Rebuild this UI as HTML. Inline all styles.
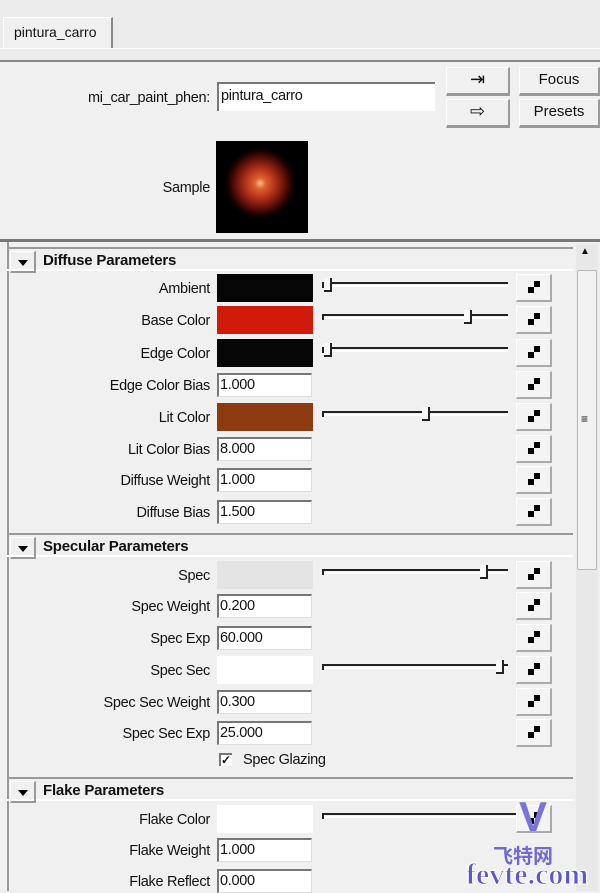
<!DOCTYPE html>
<html><head><meta charset="utf-8"><style>
*{margin:0;padding:0;box-sizing:border-box}
body{width:600px;height:891px;overflow:hidden;background:#f0f0f0;font-family:"Liberation Sans",sans-serif;font-size:14px;color:#111;position:relative}
.a{position:absolute}
.lb{position:absolute;right:390px;white-space:nowrap;font-size:14.5px;letter-spacing:-0.3px;margin-top:2px}
.sw{position:absolute;left:217px;width:96px;height:28px}
.in{position:absolute;left:217px;width:95px;height:24px;background:#fff;border-top:2px solid #777;border-left:2px solid #777;border-right:1px solid #ddd;border-bottom:1px solid #ddd;font-size:14.5px;padding-left:1px;line-height:21px;letter-spacing:-0.3px}
.sl{position:absolute;left:322px;width:186px;height:2px;background:#222;box-shadow:0 3px 0 #fff}
.sl:before{content:"";position:absolute;left:0;top:0;width:2px;height:6px;background:#222}
.th{position:absolute;width:8px;height:14px;border-right:2px solid #222;border-bottom:2px solid #222;background:#f8f8f8}
.mb{position:absolute;left:516px;width:36px;height:28px;background:#f4f4f4;border:1px solid #fff;border-right:2px solid #aaa;border-bottom:2px solid #aaa}
.mb i{position:absolute;width:6px;height:6px;background:#000}
.hd{position:absolute;left:7px;width:566px;height:24px;border-top:2px solid #999;box-shadow:0 -2px 0 #fff inset}
.hd b{position:absolute;left:36px;top:3px;font-size:15px;letter-spacing:-0.2px}
.tr{position:absolute;left:3px;top:2px;width:26px;height:22px;border:1px solid #fff;border-right:2px solid #999;border-bottom:2px solid #999}
.tr:after{content:"";position:absolute;left:7px;top:8px;border-left:5px solid transparent;border-right:5px solid transparent;border-top:6px solid #000}
.btn{position:absolute;background:#f0f0f0;border:1px solid #fff;border-right:2px solid #999;border-bottom:3px solid #999;text-align:center;font-size:15px;line-height:24px}
</style></head><body>
<div class="a" style="left:0;top:0;width:600px;height:62px;background:#ececec"></div>
<div class="a" style="left:3px;top:17px;width:110px;height:32px;border-left:1px solid #fff;border-top:1px solid #fff;border-right:2px solid #888;background:#f0f0f0;padding:6px 0 0 10px;font-size:14px">pintura_carro</div>
<div class="a" style="left:0;top:48px;width:600px;height:1px;background:#fff"></div>
<div class="a" style="left:0;top:60px;width:600px;height:2px;background:#888"></div>
<div class="lb" style="top:88px">mi_car_paint_phen:</div>
<div class="a" style="left:217px;top:82px;width:218px;height:29px;background:#fff;border-top:2px solid #777;border-left:2px solid #777;padding:4px 2px;font-size:14.5px;letter-spacing:-0.3px">pintura_carro</div>
<div class="btn" style="left:446px;top:67px;width:64px;height:29px;font-size:18px;line-height:22px">⇥</div>
<div class="btn" style="left:446px;top:99px;width:64px;height:29px;font-size:18px;line-height:22px">⇨</div>
<div class="btn" style="left:519px;top:67px;width:81px;height:29px">Focus</div>
<div class="btn" style="left:519px;top:99px;width:81px;height:29px">Presets</div>
<div class="lb" style="top:178px">Sample</div>
<div class="a" style="left:216px;top:141px;width:92px;height:92px;background:radial-gradient(circle at 48% 46%,#f7c08a 0,#e0602c 8%,#b2301a 22%,#601008 36%,#1a0200 46%,#000 52%)"></div>
<div class="a" style="left:0;top:239px;width:600px;height:3px;background:#777"></div>
<div class="a" style="left:7px;top:242px;width:2px;height:649px;background:#999"></div>
<div class="a" style="left:576px;top:244px;width:22px;height:647px;background:#e8e8e8"></div>
<div class="a" style="left:580px;top:246px;font-size:10px">▲</div>
<div class="a" style="left:577px;top:270px;width:20px;height:300px;background:#f2f2f2;border:1px solid #bbb;border-radius:2px"></div>
<div class="a" style="left:581px;top:415px;font-size:12px;line-height:8px">≡</div>

<div class="hd" style="top:247px"><div class="tr"></div><b>Diffuse Parameters</b></div>
<div class="lb" style="top:279px">Ambient</div><div class="sw" style="top:274px;background:#060606"></div><div class="sl" style="top:282px"><div class="th" style="left:2px;top:-4px"></div></div><div class="mb" style="top:274px"><i style="left:17px;top:6px"></i><i style="left:11px;top:12px"></i></div>
<div class="lb" style="top:311px">Base Color</div><div class="sw" style="top:306px;background:#d01a0a"></div><div class="sl" style="top:314px"><div class="th" style="left:142px;top:-4px"></div></div><div class="mb" style="top:306px"><i style="left:17px;top:6px"></i><i style="left:11px;top:12px"></i></div>
<div class="lb" style="top:344px">Edge Color</div><div class="sw" style="top:339px;background:#060606"></div><div class="sl" style="top:347px"><div class="th" style="left:2px;top:-4px"></div></div><div class="mb" style="top:339px"><i style="left:17px;top:6px"></i><i style="left:11px;top:12px"></i></div>
<div class="lb" style="top:376px">Edge Color Bias</div><div class="in" style="top:373px">1.000</div><div class="mb" style="top:371px"><i style="left:17px;top:6px"></i><i style="left:11px;top:12px"></i></div>
<div class="lb" style="top:408px">Lit Color</div><div class="sw" style="top:403px;background:#8e3a10"></div><div class="sl" style="top:411px"><div class="th" style="left:100px;top:-4px"></div></div><div class="mb" style="top:403px"><i style="left:17px;top:6px"></i><i style="left:11px;top:12px"></i></div>
<div class="lb" style="top:440px">Lit Color Bias</div><div class="in" style="top:437px">8.000</div><div class="mb" style="top:435px"><i style="left:17px;top:6px"></i><i style="left:11px;top:12px"></i></div>
<div class="lb" style="top:471px">Diffuse Weight</div><div class="in" style="top:468px">1.000</div><div class="mb" style="top:466px"><i style="left:17px;top:6px"></i><i style="left:11px;top:12px"></i></div>
<div class="lb" style="top:503px">Diffuse Bias</div><div class="in" style="top:500px">1.500</div><div class="mb" style="top:498px"><i style="left:17px;top:6px"></i><i style="left:11px;top:12px"></i></div>

<div class="hd" style="top:533px"><div class="tr"></div><b>Specular Parameters</b></div>
<div class="lb" style="top:566px">Spec</div><div class="sw" style="top:561px;background:#e4e4e4"></div><div class="sl" style="top:569px"><div class="th" style="left:158px;top:-4px"></div></div><div class="mb" style="top:561px"><i style="left:17px;top:6px"></i><i style="left:11px;top:12px"></i></div>
<div class="lb" style="top:597px">Spec Weight</div><div class="in" style="top:594px">0.200</div><div class="mb" style="top:592px"><i style="left:17px;top:6px"></i><i style="left:11px;top:12px"></i></div>
<div class="lb" style="top:629px">Spec Exp</div><div class="in" style="top:626px">60.000</div><div class="mb" style="top:624px"><i style="left:17px;top:6px"></i><i style="left:11px;top:12px"></i></div>
<div class="lb" style="top:661px">Spec Sec</div><div class="sw" style="top:656px;background:#fff"></div><div class="sl" style="top:664px"><div class="th" style="left:174px;top:-4px"></div></div><div class="mb" style="top:656px"><i style="left:17px;top:6px"></i><i style="left:11px;top:12px"></i></div>
<div class="lb" style="top:693px">Spec Sec Weight</div><div class="in" style="top:690px">0.300</div><div class="mb" style="top:688px"><i style="left:17px;top:6px"></i><i style="left:11px;top:12px"></i></div>
<div class="lb" style="top:724px">Spec Sec Exp</div><div class="in" style="top:721px">25.000</div><div class="mb" style="top:719px"><i style="left:17px;top:6px"></i><i style="left:11px;top:12px"></i></div>
<div class="a" style="left:219px;top:753px;width:13px;height:13px;background:#fff;border-top:2px solid #777;border-left:2px solid #777;font-size:12px;line-height:10px;font-weight:bold">✓</div>
<div class="a" style="left:243px;top:752px;font-size:14.5px;letter-spacing:-0.3px">Spec Glazing</div>

<div class="hd" style="top:777px"><div class="tr"></div><b>Flake Parameters</b></div>
<div class="lb" style="top:810px">Flake Color</div><div class="sw" style="top:805px;background:#fff"></div><div class="sl" style="top:813px;width:200px"></div><div class="mb" style="top:805px"><i style="left:17px;top:6px"></i><i style="left:11px;top:12px"></i></div>
<div class="lb" style="top:841px">Flake Weight</div><div class="in" style="top:838px">1.000</div>
<div class="lb" style="top:872px">Flake Reflect</div><div class="in" style="top:869px">0.000</div>
<div class="a" style="left:488px;top:792px;width:90px;height:50px;color:#7a74d8;font-size:42px;font-weight:bold;text-align:center;line-height:50px">V</div>
<div class="a" style="left:493px;top:840px;color:#6f6ad0;font-size:20px;font-weight:bold;font-family:'Noto Sans CJK SC',sans-serif">飞特网</div>
<div class="a" style="left:466px;top:858px;color:#5d58c8;font-size:30px;font-weight:bold;font-family:'Liberation Serif',serif;-webkit-text-stroke:1px #fff">fevte.com</div>
</body></html>
